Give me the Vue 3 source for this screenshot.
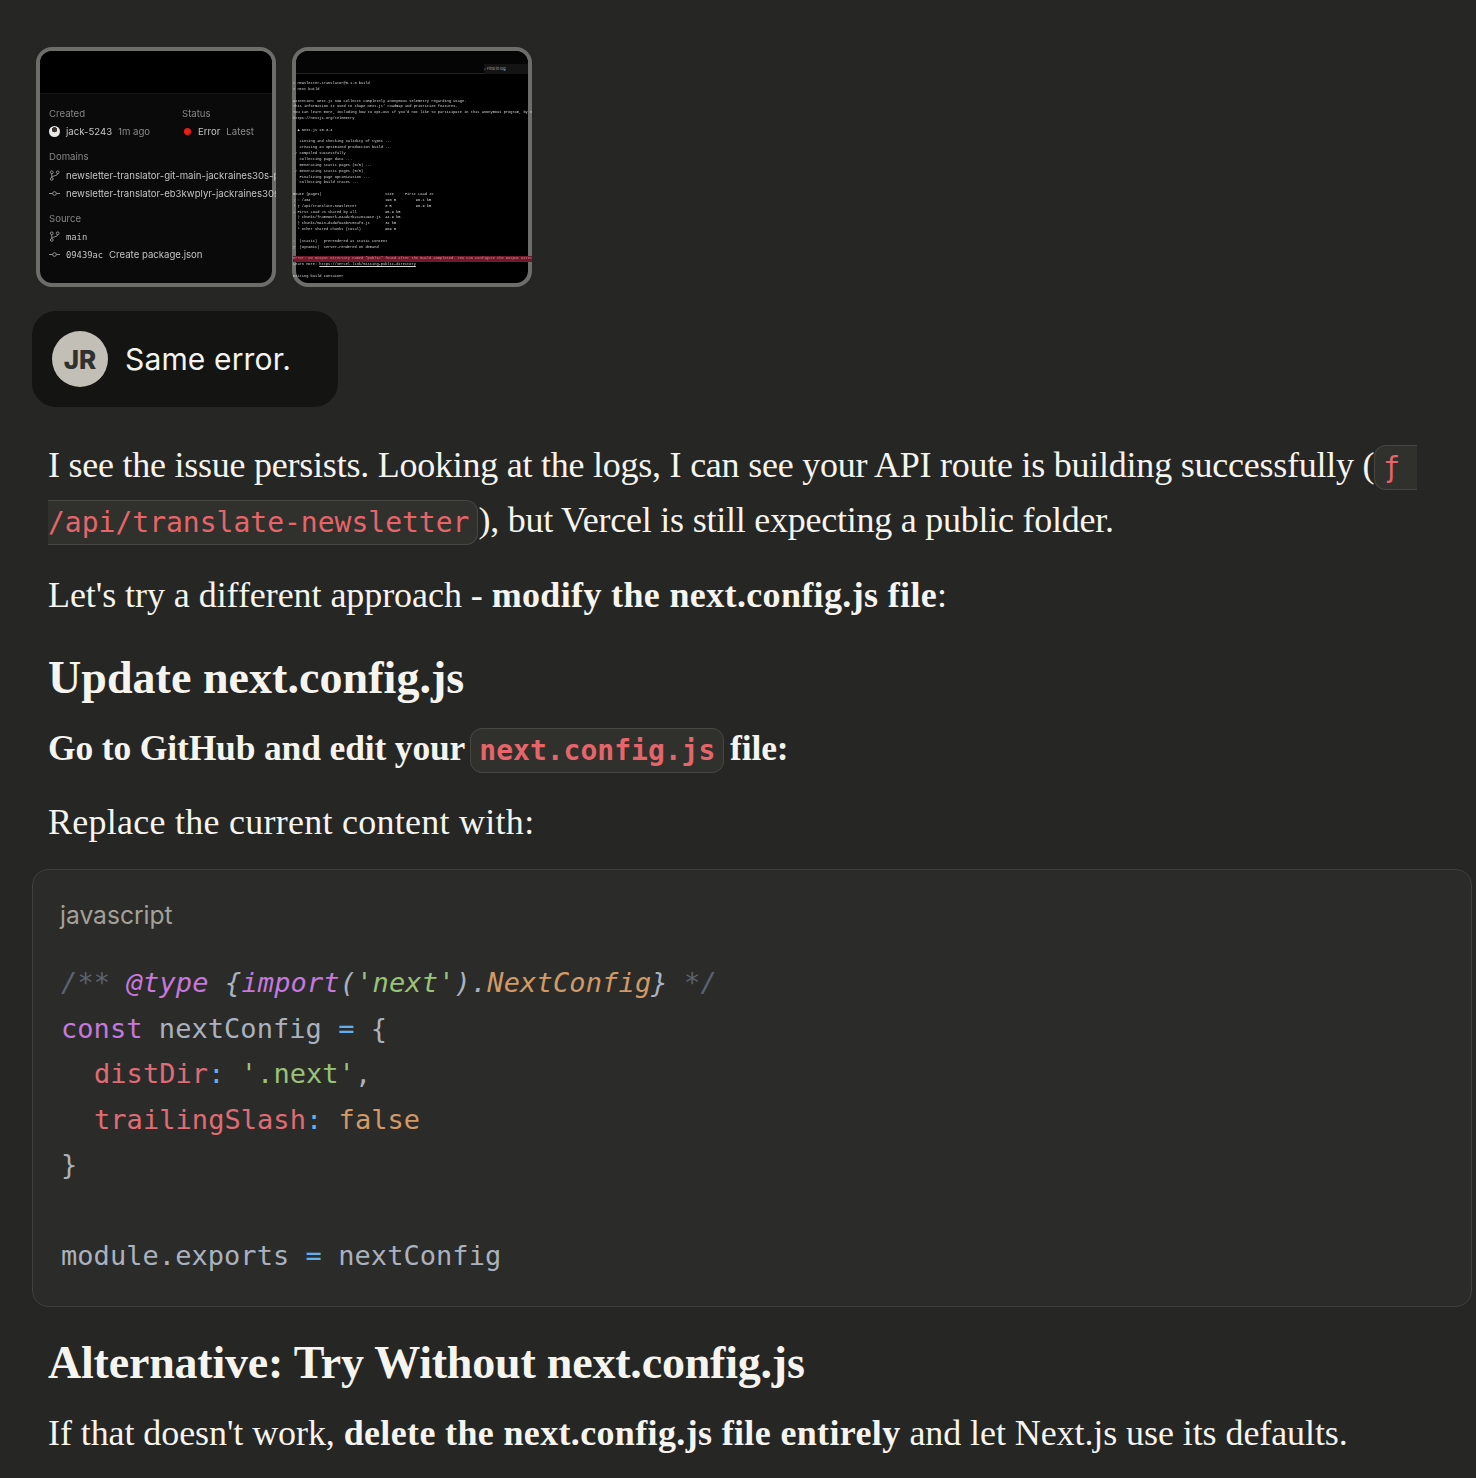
<script setup>
const log = [
  '> newsletter-translator@0.1.0 build',
  '> next build',
  '',
  'Attention: Next.js now collects completely anonymous telemetry regarding usage.',
  "This information is used to shape Next.js' roadmap and prioritize features.",
  "You can learn more, including how to opt-out if you'd not like to participate in this anonymous program, by visiting",
  'https://nextjs.org/telemetry',
  '',
  '  ▲ Next.js 15.3.4',
  '',
  '   Linting and checking validity of types ...',
  '   Creating an optimized production build ...',
  ' ✓ Compiled successfully',
  '   Collecting page data ...',
  '   Generating static pages (0/5) ...',
  ' ✓ Generating static pages (5/5)',
  '   Finalizing page optimization ...',
  '   Collecting build traces ...',
  '',
  'Route (pages)                             Size     First Load JS',
  '┌ ○ /404                                  190 B         96.1 kB',
  '└ ƒ /api/translate-newsletter             0 B           95.9 kB',
  '+ First Load JS shared by all             95.9 kB',
  '  ├ chunks/framework-64ad27b21261a9ce.js  44.9 kB',
  '  ├ chunks/main-d1d9f6a8b7c5e4f3.js       34 kB',
  '  └ other shared chunks (total)           969 B',
  '',
  '○  (Static)   prerendered as static content',
  'ƒ  (Dynamic)  server-rendered on demand',
  ''
]
</script>

<template>
  <main class="page">
    <div class="thumbs">
      <div class="thumb">
        <div class="thumb-in">
          <div class="t1-head"></div>
          <div class="t1-body">
            <div class="t1-cols">
              <div class="t1-col1">
                <div class="lbl">Created</div>
                <div class="row">
                  <span class="mini-av"></span>
                  <span class="val">jack-5243</span>
                  <span class="dim">1m ago</span>
                </div>
              </div>
              <div>
                <div class="lbl">Status</div>
                <div class="row">
                  <span class="dot"></span>
                  <span class="val">Error</span>
                  <span class="dim">Latest</span>
                </div>
              </div>
            </div>
            <div class="lbl sec">Domains</div>
            <div class="row">
              <svg class="gi" viewBox="0 0 12 12"><circle cx="3" cy="2.5" r="1.5"/><circle cx="3" cy="9.8" r="1.5"/><circle cx="9.5" cy="2.5" r="1.5"/><path d="M3 4v4.3M9.5 4c0 3-6.5 1.8-6.5 4.3"/></svg>
              <span class="val">newsletter-translator-git-main-jackraines30s-projects.vercel.app</span>
            </div>
            <div class="row">
              <svg class="gi" viewBox="0 0 12 12"><circle cx="6" cy="6" r="2"/><path d="M0 6h4M8 6h4"/></svg>
              <span class="val">newsletter-translator-eb3kwplyr-jackraines30s-projects.vercel.app</span>
            </div>
            <div class="lbl sec2">Source</div>
            <div class="row">
              <svg class="gi" viewBox="0 0 12 12"><circle cx="3" cy="2.5" r="1.5"/><circle cx="3" cy="9.8" r="1.5"/><circle cx="9.5" cy="2.5" r="1.5"/><path d="M3 4v4.3M9.5 4c0 3-6.5 1.8-6.5 4.3"/></svg>
              <span class="val mono-s">main</span>
            </div>
            <div class="row">
              <svg class="gi" viewBox="0 0 12 12"><circle cx="6" cy="6" r="2"/><path d="M0 6h4M8 6h4"/></svg>
              <span class="val mono-s">09439ac</span>
              <span class="val">Create package.json</span>
            </div>
          </div>
        </div>
      </div>

      <div class="thumb t2">
        <div class="thumb-in">
          <div class="t2-head"><span class="t2-search">⌕ Find in log</span></div>
          <div class="t2-log">
            <div v-for="(l, i) in log" :key="i" class="ll">{{ l }}</div>
            <div class="ll err">Error: No Output Directory named "public" found after the Build completed. You can configure the Output Directory in your Project</div>
            <div class="ll">Learn More: <u>https://vercel.link/missing-public-directory</u></div>
            <div class="ll">&nbsp;</div>
            <div class="ll">Exiting build container</div>
          </div>
        </div>
      </div>
    </div>

    <div class="bubble">
      <span class="avatar">JR</span>
      <span class="said">Same error.</span>
    </div>

    <div class="reply">
      <p class="p1">I see the issue persists. Looking at the logs, I can see your API route is building successfully (<code class="ic">ƒ&nbsp;<br>/api/translate-newsletter</code>), but Vercel is still expecting a public folder.</p>
      <p class="p2">Let's try a different approach - <strong>modify the next.config.js file</strong>:</p>
      <h2 class="h-a">Update next.config.js</h2>
      <h3>Go to GitHub and edit your <code class="ic big">next.config.js</code> file:</h3>
      <p class="p3">Replace the current content with:</p>
    </div>

    <section class="block">
      <div class="lang">javascript</div>
      <div class="code">
        <div class="cl i"><span class="c">/** </span><span class="k">@type</span><span class="c2"> {</span><span class="k">import</span><span class="c2">(</span><span class="s">'next'</span><span class="c2">).</span><span class="n">NextConfig</span><span class="c2">}</span><span class="c"> */</span></div>
        <div class="cl"><span class="k">const</span> nextConfig <span class="o">=</span> {</div>
        <div class="cl in"><span class="r">distDir</span><span class="o">:</span> <span class="s">'.next'</span>,</div>
        <div class="cl in"><span class="r">trailingSlash</span><span class="o">:</span> <span class="n">false</span></div>
        <div class="cl">}</div>
        <div class="cl">&nbsp;</div>
        <div class="cl">module.exports <span class="o">=</span> nextConfig</div>
      </div>
    </section>

    <div class="reply">
      <h2 class="h-b">Alternative: Try Without next.config.js</h2>
      <p class="p4">If that doesn't work, <strong>delete the next.config.js file entirely</strong> and let Next.js use its defaults.</p>
    </div>
  </main>
</template>

<style scoped>
.page {
  box-sizing: border-box;
  width: 1476px;
  height: 1478px;
  overflow: hidden;
  padding: 47px 4px 0 32px;
  background: #262624;
  color: #f5f4ef;
  font-family: "Liberation Serif", serif;
}
.thumbs { display: flex; gap: 16px; margin-left: 4px; }
.thumb {
  box-sizing: border-box;
  width: 240px;
  height: 240px;
  border: 4px solid #6d6d6b;
  border-radius: 16px;
  background: #0a0a0a;
  background-clip: padding-box;
  font-family: Inter, sans-serif;
  font-size: 9.6px;
  line-height: 14px;
}
.thumb-in {
  box-sizing: border-box;
  width: 240px;
  height: 240px;
  margin: -4px;
  padding: 4px;
  border-radius: 16px;
  overflow: hidden;
}
.t1-head { height: 43px; background: #000; border-bottom: 1px solid #161616; box-sizing: border-box; border-radius: 12px 12px 0 0; }
.t1-body { padding: 12.5px 0 0 9px; white-space: nowrap; filter: blur(0.25px); }
.t1-cols { display: flex; }
.t1-col1 { width: 133px; }
.lbl { color: #858585; }
.sec { margin-top: 11px; margin-bottom: 5px; }
.sec2 { margin-top: 11px; }
.row { display: flex; align-items: center; gap: 6px; margin-top: 4px; height: 14px; }
.val { color: #c4c4c4; }
.dim { color: #8a8a8a; }
.mono-s { font-family: "DejaVu Sans Mono", monospace; font-size: 8.8px; }
.gi { width: 11px; height: 11px; flex: none; fill: none; stroke: #9a9a9a; stroke-width: 1; }
.mini-av {
  width: 11px; height: 11px; border-radius: 50%; flex: none;
  background: radial-gradient(circle at 50% 35%, #3a3532 0 28%, #e8e8e6 30%);
}
.dot { width: 7px; height: 7px; border-radius: 50%; background: #f01a12; margin: 0 1px 0 2px; flex: none; }
.t2 { background: #000; background-clip: padding-box; }
.t2-head {
  height: 23px;
  box-sizing: border-box;
  padding-top: 13px;
  background: #050505;
  border-bottom: 1px solid #222;
  border-radius: 12px 12px 0 0;
  display: flex;
  justify-content: flex-end;
}
.t2-search {
  width: 44px;
  height: 10px;
  font-size: 3.8px;
  line-height: 10px;
  color: #aaa;
  background: #141414;
}
.t2-log { padding-top: 7px; margin: 0 -4px 0 -3px; filter: blur(0.25px); }
.ll {
  font-family: "Liberation Mono", monospace;
  font-size: 3.67px;
  line-height: 5.85px;
  height: 5.85px;
  white-space: pre;
  color: #d8d8d8;
}
.err { background: #6e1a2a; color: #e28a96; }
.bubble {
  display: inline-flex;
  align-items: center;
  gap: 17px;
  margin-top: 24px;
  width: 306px;
  height: 96px;
  box-sizing: border-box;
  padding-left: 20px;
  border-radius: 24px;
  background: #141413;
  vertical-align: top;
}
.avatar {
  width: 56px;
  height: 56px;
  border-radius: 50%;
  background: #c2c0b6;
  color: #30302e;
  font: 800 26px/58px Inter, sans-serif;
  text-align: center;
}
.said { font: 400 30px/42px Inter, sans-serif; letter-spacing: 0.15px; color: #f5f4ef; }
.reply { padding-left: 16px; }
p, h2, h3 { margin: 0; }
p { font-size: 36px; line-height: 55px; letter-spacing: -0.06px; }
strong { font-weight: 700; letter-spacing: 0.35px; }
.p1 { margin-top: 31px; white-space: nowrap; letter-spacing: -0.24px; }
.p2 { margin-top: 20px; }
.h-a { margin-top: 30px; font-size: 46px; line-height: 50px; letter-spacing: 0.05px; }
h3 { margin-top: 23px; font-size: 35.5px; line-height: 44px; letter-spacing: -0.15px; }
.p3 { margin-top: 25px; letter-spacing: 0.26px; }
.ic {
  font-family: "DejaVu Sans Mono", monospace;
  font-size: 28px;
  line-height: 1;
  font-weight: 400;
  letter-spacing: 0;
  color: #e5656b;
  background: #30302c;
  border: 1px solid #464642;
  border-radius: 12px;
  padding: 5px 8px;
  -webkit-box-decoration-break: slice;
  box-decoration-break: slice;
}
.big { font-weight: 700; margin: 0 -3px; }
.block {
  box-sizing: border-box;
  margin-top: 19px;
  width: 1440px;
  height: 438px;
  padding: 30px 0 0 27px;
  border: 1px solid #40403d;
  border-radius: 16px;
  background: #2b2b29;
}
.lang { font: 400 24.6px/30px Inter, sans-serif; color: #a3a198; }
.code {
  margin-top: 30px;
  margin-left: 1px;
  font-family: "DejaVu Sans Mono", monospace;
  font-size: 27px;
  line-height: 45.5px;
  letter-spacing: 0.05px;
  color: #abb2bf;
}
.cl { white-space: pre; height: 45.5px; }
.in { padding-left: 33px; }
.i { font-style: italic; letter-spacing: 0.14px; }
.c { color: #5c6370; }
.c2 { color: #abb2bf; }
.k { color: #c678dd; }
.s { color: #98c379; }
.n { color: #d19a66; }
.o { color: #61afef; }
.r { color: #e06c75; }
.h-b { margin-top: 31px; font-size: 46px; line-height: 50px; letter-spacing: -0.2px; }
.p4 { margin-top: 18px; letter-spacing: -0.08px; }
</style>

<style>
html, body { background: #262624; }
</style>
